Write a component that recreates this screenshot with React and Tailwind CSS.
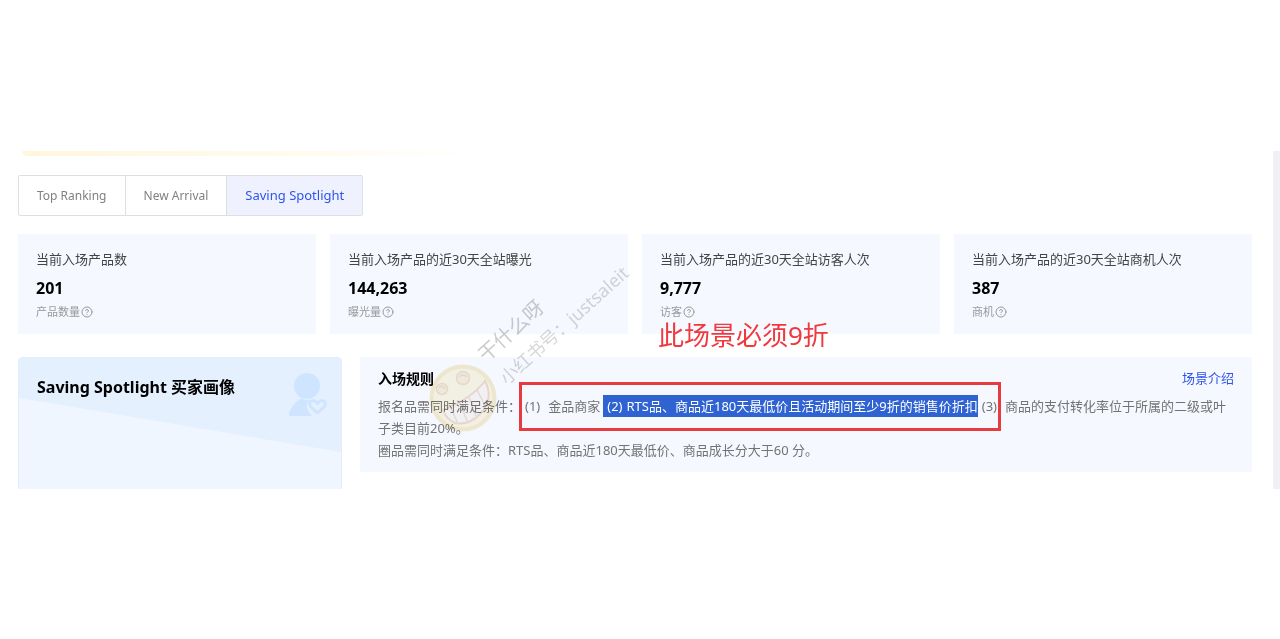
import { CircleHelp } from "lucide-react";

const tabs = ["Top Ranking", "New Arrival", "Saving Spotlight"];

const stats = [
  { title: "当前入场产品数", value: "201", unit: "产品数量" },
  { title: "当前入场产品的近30天全站曝光", value: "144,263", unit: "曝光量" },
  { title: "当前入场产品的近30天全站访客人次", value: "9,777", unit: "访客" },
  { title: "当前入场产品的近30天全站商机人次", value: "387", unit: "商机" },
];

const App = () => {
  return (
    <main className="pt-[151px] bg-white font-['Noto_Sans','Noto_Sans_CJK_SC',sans-serif]">
      <div className="flex h-[338px] overflow-hidden">
        <div className="relative flex-1 min-w-0 pl-[18px] pr-[21px]">
          <div className="h-[5px] w-[470px] ml-1 rounded-bl-lg bg-linear-to-r from-[#fff6dc] via-[#fffaeb] to-white" />

          <Tabs active="Saving Spotlight" />

          <section className="grid grid-cols-4 gap-[14px] mt-[18px]">
            {stats.map((s) => (
              <StatCard key={s.title} {...s} />
            ))}
          </section>

          <section className="flex items-start gap-[18px] mt-[23px]">
            <BuyerCard />
            <Rules />
          </section>

          <p className="absolute left-[658px] top-[166px] text-[26px] leading-9 text-[#f0393f]">此场景必须9折</p>
          <Watermark />
        </div>
        <div className="w-[7px] bg-[#f0f0f5]" />
      </div>
    </main>
  );
};

const Tabs = ({ active }) => (
  <div className="inline-flex h-[41px] mt-[19px] rounded-xs border border-[#dddfe6] divide-x divide-[#dddfe6] align-top">
    {tabs.map((tab) => (
      <button key={tab} type="button" className={`px-[18px] ${tab === active ? "bg-[#eff2fe] text-[13px] text-[#2f54eb]" : "bg-white text-xs text-[#808080]"}`}>
        {tab}
      </button>
    ))}
  </div>
);

const StatCard = ({ title, value, unit }) => (
  <div className="h-[100px] px-[18px] pt-4 bg-[#f5f8fe]">
    <h3 className="text-[13px] leading-[18px] text-[#444]">{title}</h3>
    <p className="mt-[9px] text-base leading-[22px] font-bold text-black">{value}</p>
    <p className="flex items-center gap-px mt-[5px] text-[11px] leading-4 text-[#999]">
      {unit}
      <CircleHelp size={12} strokeWidth={2} />
    </p>
  </div>
);

const BuyerCard = () => (
  <div className="relative flex justify-between shrink-0 w-[324px] h-[160px] pl-[18px] pr-[14px] rounded-t-sm border border-[#e0eefd] bg-[#eff6ff] overflow-hidden">
    <svg className="absolute inset-0 w-full h-24" viewBox="0 0 325 96" preserveAspectRatio="none" aria-hidden="true">
      <path d="M0 0H325V94L0 40Z" fill="#e4f0fe" />
    </svg>
    <h2 className="relative mt-[17px] text-base leading-6 font-bold text-black">Saving Spotlight 买家画像</h2>
    <svg className="relative mt-[14px]" width="39" height="45" viewBox="0 0 39 45" aria-hidden="true">
      <circle cx="19" cy="14" r="13" fill="#cfe4fe" />
      <path d="M12 27Q14 26 17 28H22Q18 31 19 36Q21 41 24 44H3Q0 44 1 40Q5 32 12 27Z" fill="#cfe4fe" />
      <path d="M29.500 41L22.500 34.500Q20.500 31 23.500 29Q27 27.500 29.500 31.500Q32 27.500 35.500 29Q38.500 31 36.500 34.500Z" fill="none" stroke="#cfe4fe" strokeWidth="2.800" strokeLinejoin="round" />
    </svg>
  </div>
);

const Rules = () => (
  <div className="relative flex-1 min-w-0 h-[115px] px-[18px] pt-3 bg-[#f5f8fe]">
    <div className="flex items-center justify-between h-5">
      <h2 className="text-sm font-bold text-black">入场规则</h2>
      <a href="#intro" className="text-[13px] text-[#2f54eb]">
        场景介绍
      </a>
    </div>
    <div className="mt-[6px] text-[13px] leading-[22px] text-[#737373]">
      <p>
        报名品需同时满足条件：
        <span className="ml-1 mr-2">(1)</span>金品商家
        <span className="ml-[3px] py-[2px] bg-[#2f63d2] text-white">
          <span className="ml-1 mr-1">(2)</span>RTS品、商品近180天最低价且活动期间至少9折的销售价折扣
        </span>
        <span className="ml-1 mr-2">(3)</span>商品的支付转化率位于所属的二级或叶子类目前20%。
      </p>
      <p>圈品需同时满足条件：RTS品、商品近180天最低价、商品成长分大于60 分。</p>
    </div>
    <div className="absolute left-[159px] top-[25px] w-[482px] h-[49px] border-3 border-[#e83b40]" />
  </div>
);

const Watermark = () => (
  <div className="absolute left-[428px] top-[100px] w-[220px] h-[182px] pointer-events-none mix-blend-multiply text-[#9a9a9a]/50">
    <svg className="absolute left-0 bottom-0 opacity-75" width="70" height="70" viewBox="0 0 70 70" aria-hidden="true">
      <circle cx="35" cy="35" r="31.500" fill="#fbf1d2" fillOpacity="0.8" stroke="#f3e2b4" strokeOpacity="0.8" strokeWidth="4" />
      <g stroke="#e0c8b4" strokeOpacity="0.7" strokeWidth="1.500">
        <circle cx="14" cy="26" r="5.500" fill="#f3e6c4" fillOpacity="0.6" />
        <circle cx="35" cy="15" r="6.500" fill="#f3e6c4" fillOpacity="0.6" />
        <path d="M11 25Q14 21 17 26M31 14Q35 10 39 14" fill="none" />
        <path d="M15 47Q43 36 57 18Q66 35 53 50Q41 63 27 60Q18 56 15 47Z" fill="#faf6f0" stroke="#e6bfb0" strokeWidth="2" />
        <path d="M23 45L29 59M32 40L39 58M41 34L48 53M49 27L57 42" fill="none" />
      </g>
    </svg>
    <span className="absolute left-[43px] top-[68px] text-xl leading-6 whitespace-nowrap -rotate-42">干什么呀</span>
    <span className="absolute left-[53px] top-[62px] text-lg leading-6 whitespace-nowrap text-[#9a9a9a]/40 -rotate-42">小红书号：justsaleit</span>
  </div>
);

export default App;
